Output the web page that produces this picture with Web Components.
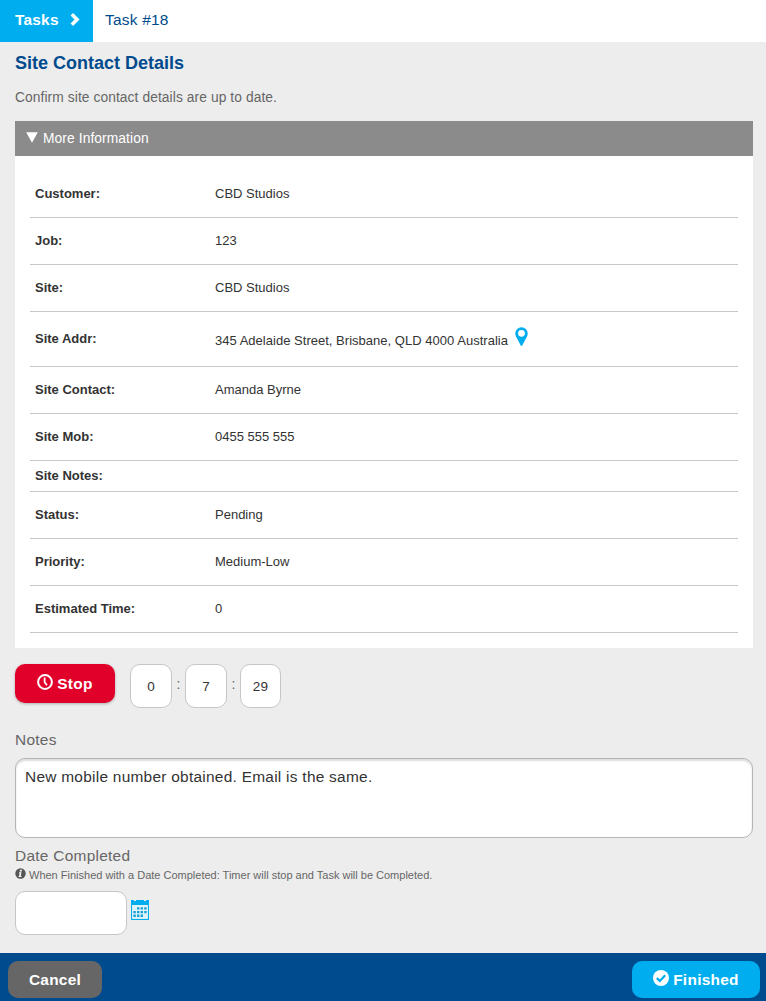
<!DOCTYPE html>
<html lang="en"><head><meta charset="utf-8"><title>Task #18</title>
<style>html,body{margin:0;height:100%}body{background:#ededed;font-family:"Liberation Sans",Arial,sans-serif;color:#333;overflow:hidden}</style></head>
<body><task-page></task-page>
<script>
const define=(name,html)=>{const t=document.createElement('template');t.innerHTML=html;
customElements.define(name,class extends HTMLElement{constructor(){super();this.attachShadow({mode:'open'}).append(t.content.cloneNode(true));}});};

define('task-crumbs',`<style>:host{display:flex;height:42px;background:#fff;font-size:15.45px;line-height:40px;color:#004b8d;letter-spacing:.22px}
.t{box-sizing:border-box;width:93px;padding-left:15px;background:#00aeef;color:#fff;font-weight:bold;display:flex}
svg{display:block;margin:13px 0 0 11px}.n{padding-left:12px}</style>
<div class="t"><span>Tasks</span><svg width="11" height="13" viewBox="0 0 11 13"><path d="M1.8 1.3 7 6.5 1.8 11.7" fill="none" stroke="#fff" stroke-width="3.6"/></svg></div><div class="n"><slot></slot></div>`);

define('info-panel',`<style>:host{display:block;background:#fff;height:527px}
header{height:35px;background:#8b8b8b;color:#fff;font-size:13.8px;letter-spacing:.09px;line-height:36px;display:flex;padding-left:11px}
svg{margin:11px 5px 0 0;flex:none}.b{padding:15px 15px 0}</style>
<header><svg width="12" height="11" viewBox="0 0 12 11"><path d="M.2.2h11.6L6 10.8z" fill="#fff"/></svg><slot name="title"></slot></header><div class="b"><slot></slot></div>`);

define('info-row',`<style>:host{box-sizing:border-box;display:flex;align-items:center;height:47px;border-bottom:1px solid #c8c8c8;font-size:13px;padding:0 5px 1px}
b{width:180px}.v{display:flex}</style><b><slot name="label"></slot></b><span class="v"><slot></slot></span>`);

define('map-pin',`<style>:host{display:block;margin:-3px 0 0 7px;height:20px}svg{display:block}</style>
<svg width="13" height="20" viewBox="0 0 13 20"><path d="M6.5.3A6.2 6.2 0 0 0 .3 6.5C.3 9 1.6 10.6 2.6 12.4L5.5 18.1Q6.5 19.8 7.5 18.1L10.4 12.4C11.4 10.6 12.7 9 12.7 6.5A6.2 6.2 0 0 0 6.5.3z" fill="#00aeef"/><circle cx="6.5" cy="6.3" r="3.4" fill="#fff"/></svg>`);

define('ui-button',`<style>:host{box-sizing:border-box;display:flex;align-items:center;justify-content:center;color:#fff;font-weight:bold;font-size:15.45px;letter-spacing:.27px;border-radius:10px;gap:4px}</style><slot name="icon"></slot><span><slot></slot></span>`);

define('text-box',`<style>:host{box-sizing:border-box;display:block;height:44px;border:1px solid #c6c6c6;border-radius:10px;background:#fff;font-size:13.5px;letter-spacing:.15px;line-height:43px;text-align:center}</style><slot></slot>`);

define('icon-clock',`<style>:host,svg{display:block}</style><svg width="16" height="16" viewBox="0 0 16 16" fill="none" stroke="#fff"><circle cx="8" cy="8" r="6.9" stroke-width="2"/><path d="M7.6 3.6V8l2.3 3.3" stroke-width="1.8"/></svg>`);
define('icon-check',`<style>:host,svg{display:block}</style><svg width="16" height="16" viewBox="0 0 16 16"><circle cx="8" cy="8" r="8" fill="#fff"/><path d="M3.8 8.1 6.8 10.9 12.2 5.2" fill="none" stroke="#00aeef" stroke-width="2.2"/></svg>`);
define('icon-info',`<style>:host,svg{display:block}</style><svg width="11" height="11" viewBox="0 0 11 11"><circle cx="5.5" cy="5.5" r="5.2" fill="#555"/><path d="M5 1.8h2l-.3 1.6h-2zM4.1 4.3h2.4L5.7 8h.9l-.2 1H3.5l.2-1h.4l.6-2.7h-.8z" fill="#fff"/></svg>`);
define('icon-calendar',`<style>:host,svg{display:block}</style><svg width="18" height="20" viewBox="0 0 18 20"><path d="M0 0h3v1h2V0h8v1h2V0h3v20H0zM1.2 5v13.8h15.6V5z" fill="#00aeef" fill-rule="evenodd"/><path d="M1.2 5h15.6v13.8H1.2z" fill="#dff3fb"/><path d="M6 7.2h2.4v2.4H6zm3.6 0H12v2.4H9.6zm3.6 0h2.4v2.4h-2.4zM2.4 10.9h2.4v2.4H2.4zm3.6 0h2.4v2.4H6zm3.6 0H12v2.4H9.6zm3.6 0h2.4v2.4h-2.4zM2.4 14.6h2.4V17H2.4zm3.6 0h2.4V17H6zm3.6 0H12V17H9.6z" fill="#189fd5"/></svg>`);

define('task-page',`<style>:host{display:flex;flex-direction:column;height:1001px}
main{flex:1;padding:0 13px 0 15px;color:#666}
h1{margin:0;font-size:18px;line-height:22px;padding-top:10px;color:#004b8d}
.intro{margin:16px 0 15px;font-size:13.8px;letter-spacing:.08px;line-height:16px}
info-panel{color:#333}
.addr{height:55px}.short{height:31px}
.street{padding-top:3px;letter-spacing:.02px}
.timer{display:flex;margin-top:16px;height:44px}
.stop{width:100px;height:39px;background:#e0002a;box-shadow:0 1px 3px #0004;margin-right:15px}
.timer text-box{color:#333}.timer i{font-style:normal;width:13px;text-align:center;font-size:14px;line-height:41px}
.label{font-size:15.45px;letter-spacing:.27px;line-height:18px}
.notes{box-sizing:border-box;height:80px;border:1px solid #b5b5b5;border-radius:10px;background:#fff;box-shadow:inset 0 2px 2px #0002;padding:8px 9px;font-size:15.45px;letter-spacing:.26px;line-height:20px;color:#333}
.help{display:flex;font-size:11px;line-height:14px;gap:3px;margin:3px 0 9px}
.date{display:flex;gap:4px}.date text-box{width:112px}.date icon-calendar{margin-top:9px}
footer{box-sizing:border-box;height:48px;background:#004b8d;padding:8px 6px 0 8px;display:flex;justify-content:space-between}
footer ui-button{height:37px}.cancel{width:94px;background:#666}.done{width:128px;background:#00aeef}
</style>
<task-crumbs>Task #18</task-crumbs>
<main><h1>Site Contact Details</h1><p class="intro">Confirm site contact details are up to date.</p>
<info-panel><span slot="title">More Information</span>
<info-row><span slot="label">Customer:</span>CBD Studios</info-row>
<info-row><span slot="label">Job:</span>123</info-row>
<info-row><span slot="label">Site:</span>CBD Studios</info-row>
<info-row class="addr"><span slot="label">Site Addr:</span><span class="street">345 Adelaide Street, Brisbane, QLD 4000 Australia</span><map-pin></map-pin></info-row>
<info-row><span slot="label">Site Contact:</span>Amanda Byrne</info-row>
<info-row><span slot="label">Site Mob:</span>0455 555 555</info-row>
<info-row class="short"><span slot="label">Site Notes:</span></info-row>
<info-row><span slot="label">Status:</span>Pending</info-row>
<info-row><span slot="label">Priority:</span>Medium-Low</info-row>
<info-row><span slot="label">Estimated Time:</span>0</info-row></info-panel>
<div class="timer"><ui-button class="stop"><icon-clock slot="icon" style="margin-top:-3px"></icon-clock>Stop</ui-button>
<text-box style="width:42px">0</text-box><i>:</i><text-box style="width:42px">7</text-box><i>:</i><text-box style="width:41px">29</text-box></div>
<div class="label" style="margin:23px 0 9px">Notes</div>
<div class="notes">New mobile number obtained. Email is the same.</div>
<div class="label" style="margin-top:9px">Date Completed</div>
<div class="help"><icon-info></icon-info><span>When Finished with a Date Completed: Timer will stop and Task will be Completed.</span></div>
<div class="date"><text-box></text-box><icon-calendar></icon-calendar></div></main>
<footer><ui-button class="cancel">Cancel</ui-button><ui-button class="done"><icon-check slot="icon" style="margin-top:-3px"></icon-check>Finished</ui-button></footer>`);
</script></body></html>
